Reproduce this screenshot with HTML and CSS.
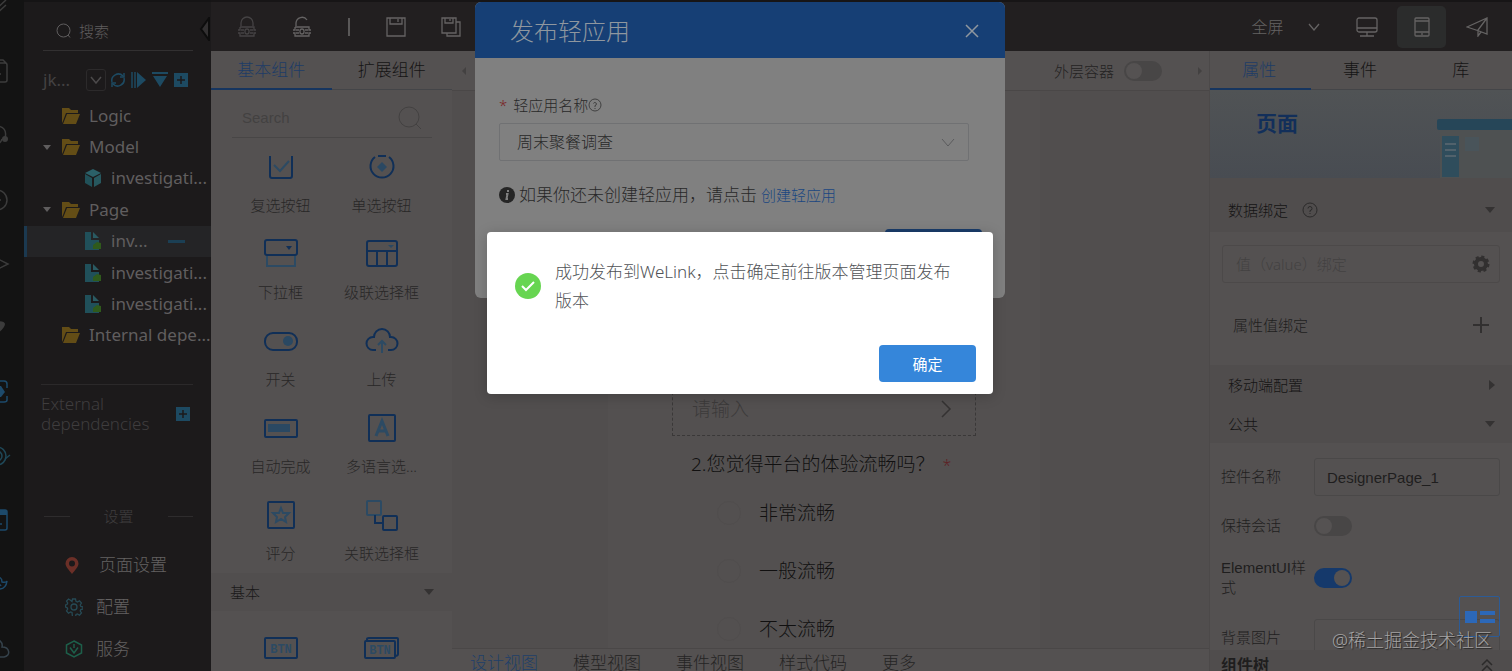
FILE: index.html
```
<!DOCTYPE html>
<html lang="zh-CN">
<head>
    <meta charset="UTF-8">
    <meta name="viewport" content="width=device-width, initial-scale=1.0">
    <title>发布轻应用</title>
    <link rel="stylesheet" href="styles.css">
</head>
<body>

    <!-- Icon rail -->
    <nav class="rail">
        <svg viewBox="0 0 24 24"><path d="M-4 13L6 4M-4 18L6 9"/></svg>
        <svg viewBox="0 0 24 24"><path d="M-4 3H5a2 2 0 0 1 2 2V20a2 2 0 0 1-2 2H-4M-4 0H3l4 4M0 14h1"/></svg>
        <svg viewBox="0 0 24 24"><path d="M-4 2C4 2 7 7 5 14M-4 20c3 0 5-2 6-5"/><circle class="fill" cx="5" cy="15" r="3"/></svg>
        <svg viewBox="0 0 24 24"><circle cx="-3" cy="12" r="10"/><circle class="fill" cx="0" cy="12" r="1"/></svg>
        <svg viewBox="0 0 24 24"><path d="M-2 7L8 12L-2 17"/></svg>
        <svg viewBox="0 0 24 24"><path class="fill" d="M-5 7c3-3 10-2 10 1s-4 7-7 9"/></svg>
        <svg class="blue" viewBox="0 0 24 24"><path d="M-2 1H4q3 0 3 3v4M7 16v4q0 2-3 2H-2"/><path class="fill" d="M-2 6h3l4 6-4 5h-3z"/></svg>
        <svg class="teal" viewBox="0 0 24 24"><circle cx="-3" cy="12" r="9"/><circle cx="-3" cy="12" r="5"/><path d="M5 15l5-4"/></svg>
        <svg class="blue" viewBox="0 0 24 24"><path d="M-4 2H5q2 0 2 2V20q0 2-2 2H-4M-3 16H2"/><path class="fill" d="M-4 2H7V7H-4z"/></svg>
        <svg class="blue" viewBox="0 0 24 24"><path d="M-4 6q6-2 6 4 4 1 5-1-1 8-8 8M-4 12q4 0 5 2"/></svg>
        <svg class="slate" viewBox="0 0 24 24"><path d="M-6 6c5-5 9 1 8 5 8 0 9 9 2 10H-6"/></svg>
    </nav>

    <!-- Project sidebar -->
    <aside class="sidebar">
        <button class="collapse" aria-label="收起"><svg viewBox="0 0 12 24" width="12" height="24"><path d="M10 1L2 12l8 11z"/></svg></button>
        <label class="side-search">
            <svg viewBox="0 0 16 16" width="16" height="16"><circle cx="7.500" cy="7.500" r="6.500"/><path d="M12 12l2 2.500"/></svg>
            <input type="text" placeholder="搜索">
        </label>
        <div class="project">
            <span class="project-name">jk...</span>
            <button class="project-drop" aria-label="切换项目"><svg viewBox="0 0 12 8" width="12" height="8"><path d="M1 1l5 6 5-6"/></svg></button>
            <button aria-label="刷新"><svg class="refresh" viewBox="0 0 16 16" width="16" height="16"><path d="M2 10A6.500 6.500 0 0 1 13 4M14 6A6.500 6.500 0 0 1 3 12"/><path d="M14 1v4h-4M2 15v-4h4"/></svg></button>
            <button aria-label="运行"><svg viewBox="0 0 16 16" width="16" height="16"><path d="M1 0v16M4 0v16"/><path class="solid" d="M6 0l9 8-9 8z"/></svg></button>
            <button aria-label="筛选"><svg viewBox="0 0 16 16" width="16" height="16"><path class="solid" d="M0 0h16v2H0zM1 4h14L8 15z"/></svg></button>
            <button aria-label="新增"><svg viewBox="0 0 16 16" width="16" height="16"><rect class="solid" x="1" y="1" width="14" height="14"/><path class="plus" d="M8 4v8M4 8h8"/></svg></button>
        </div>
        <ul class="tree">
            <li class="folder"><i></i><svg viewBox="0 0 18 16"><use href="#folder"/></svg>Logic</li>
            <li class="folder open"><i></i><svg viewBox="0 0 18 16"><use href="#folder"/></svg>Model</li>
            <li class="leaf"><svg viewBox="0 0 18 18"><use href="#cube"/></svg>investigati...</li>
            <li class="folder open"><i></i><svg viewBox="0 0 18 16"><use href="#folder"/></svg>Page</li>
            <li class="leaf active"><svg viewBox="0 0 18 18"><use href="#page"/></svg>inv...<b class="more"></b></li>
            <li class="leaf"><svg viewBox="0 0 18 18"><use href="#page"/></svg>investigati...</li>
            <li class="leaf"><svg viewBox="0 0 18 18"><use href="#page"/></svg>investigati...</li>
            <li class="folder"><i></i><svg viewBox="0 0 18 16"><use href="#folder"/></svg>Internal depe...</li>
        </ul>
        <div class="external">
            <span>External dependencies</span>
            <button aria-label="新增依赖"><svg viewBox="0 0 16 16" width="16" height="16"><rect class="solid" x="1" y="1" width="14" height="14"/><path class="plus" d="M8 4v8M4 8h8"/></svg></button>
        </div>
        <div class="settings-title">设置</div>
        <ul class="settings">
            <li class="first"><svg viewBox="0 0 18 18"><path fill="#6b2f27" fill-rule="evenodd" d="M9 1a6.500 6.500 0 0 1 6.500 6.500C15.500 11 12 14 9 18 6 14 2.500 11 2.500 7.500A6.500 6.500 0 0 1 9 1zm0 3.500a3 3 0 1 0 0 6 3 3 0 0 0 0-6z"/></svg>页面设置</li>
            <li><svg viewBox="0 0 18 18" fill="none" stroke="#264a55" stroke-width="1.300"><path d="M7.500 1h3l.5 2.300 1.500.7 2-1.200 2 2.200-1.300 2 .6 1.500 2.200.5v2l-2.200.6-.6 1.400 1.300 2-2 2.200-2-1.300-1.500.6-.5 2.500h-3L7 14.500 5.500 14l-2 1.200-2-2.200L2.700 11 2 9.600l-1.500-.6V7L2 6.500l.7-1.500-1.200-2 2-2 2 1.200L7 3.500z"/><circle cx="9" cy="9" r="3"/></svg>配置</li>
            <li><svg viewBox="0 0 18 18" fill="none" stroke="#1d5f4a" stroke-width="1.500"><path d="M9 1l7.500 4v8L9 17l-7.500-4V5z"/><path d="M5 7.500l4 5.500 4-5.500M9 4v4"/></svg>服务</li>
        </ul>
    </aside>

    <main class="main">
        <header class="topbar">
            <div class="tools">
                <button class="dim" aria-label="锁定"><svg viewBox="0 0 20 22"><use href="#lock-body"/><path d="M4 10V7a6 6 0 0 1 12 0v3"/></svg></button>
                <button aria-label="解锁"><svg viewBox="0 0 20 22"><use href="#lock-body"/><path d="M4 10V7a6 6 0 0 1 11-3"/></svg></button>
                <span class="split"></span>
                <button aria-label="保存"><svg viewBox="0 0 20 22"><path d="M1 2h18v18H1zM4 2v6h12V2M12 3v3"/></svg></button>
                <button aria-label="全部保存"><svg viewBox="0 0 20 22"><path d="M1 2h14v15H1zM4 2v5h8V2M9 3v2M15 6h4v14H6v-3"/></svg></button>
            </div>
            <div class="view-tools">
                <button class="screen">全屏<svg viewBox="0 0 12 8" width="12" height="8"><path d="M1 1l5 6 5-6"/></svg></button>
                <button aria-label="桌面"><svg viewBox="0 0 22 20"><rect x="1" y="1" width="20" height="14" rx="2"/><path d="M1 11h20M11 15v4M4 19h14"/></svg></button>
                <button class="on" aria-label="手机"><svg viewBox="0 0 22 20"><rect x="4" y="1" width="14" height="18" rx="1"/><path d="M4 4h14M4 15h14M11 16v2"/></svg></button>
                <button aria-label="发布"><svg viewBox="0 0 22 20"><path d="M1 10L21 1v16l-8-3zM21 1l-9 12v6l3-4"/></svg></button>
            </div>
        </header>

        <div class="workspace">
            <!-- Component palette -->
            <section class="palette">
                <div class="tabs palette-tabs">
                    <button class="active">基本组件</button>
                    <button>扩展组件</button>
                </div>
                <label class="palette-search">
                    <input type="text" placeholder="Search">
                    <svg viewBox="0 0 24 24" width="24" height="24"><circle cx="11" cy="11" r="10"/><path d="M18 18l5 5"/></svg>
                </label>
                <div class="grid">
                    <div class="item"><svg viewBox="0 0 36 32"><path d="M7 5v20q0 2 2 2h18q2 0 2-2V5"/><path class="light" d="M11 14l6 6 9-10"/></svg>复选按钮</div>
                    <div class="item"><svg viewBox="0 0 36 32"><path d="M11 6a11.500 11.500 0 1 0 14 0M14 5h8"/><path class="lightfill" d="M18 11l5 5-5 5-5-5z"/></svg>单选按钮</div>
                    <div class="item"><svg viewBox="0 0 36 32"><path class="light" d="M4 17v11h28V17"/><rect x="2" y="2" width="32" height="15" rx="2"/><path class="darkfill" d="M23 8h6l-3 4z"/></svg>下拉框</div>
                    <div class="item"><svg viewBox="0 0 36 32"><rect x="3" y="3" width="30" height="25" rx="2"/><path d="M3 13h30M13 13v15M23 13v15"/><path class="lightfill" d="M24 7h6l-3 3z"/></svg>级联选择框</div>
                    <div class="item"><svg viewBox="0 0 36 32"><rect x="2" y="8" width="32" height="17" rx="8"/><circle class="lightfill" cx="25" cy="16" r="5"/></svg>开关</div>
                    <div class="item"><svg viewBox="0 0 36 32"><path d="M12 25H9a6 6 0 0 1 0-13h1a8 8 0 0 1 16 0h1a6 6 0 0 1 0 13h-3"/><path class="light" d="M18 28V16M14 20l4-4 4 4"/></svg>上传</div>
                    <div class="item"><svg viewBox="0 0 36 32"><rect x="2" y="8" width="32" height="17" rx="1"/><path class="lightfill" d="M5 12h22v8H5z"/></svg>自动完成</div>
                    <div class="item"><svg viewBox="0 0 36 32"><rect x="5" y="3" width="26" height="26" rx="1"/><path class="light thick" d="M12 24l6-15 6 15M14 19h8"/></svg>多语言选...</div>
                    <div class="item"><svg viewBox="0 0 36 32"><rect x="5" y="3" width="26" height="26" rx="1"/><path class="light" d="M18 9l2 5h6l-4 4 1 5-5-3-5 3 1-5-4-4h6z"/></svg>评分</div>
                    <div class="item"><svg viewBox="0 0 36 32"><rect class="light" x="3" y="2" width="14" height="14" rx="1"/><rect x="19" y="17" width="14" height="14" rx="1"/><path d="M11 16v8h8"/></svg>关联选择框</div>
                </div>
                <button class="group">基本<i class="caret"></i></button>
                <div class="grid second">
                    <div class="item"><svg viewBox="0 0 36 32"><rect x="2" y="6" width="32" height="20" rx="1"/><text x="18" y="21">BTN</text></svg></div>
                    <div class="item"><svg viewBox="0 0 36 32"><path d="M3 9V7q0-1 2-1h28q1 0 1 1v15q0 2-3 2"/><rect x="1" y="9" width="30" height="17" rx="1"/><text x="16" y="22">BTN</text></svg></div>
                </div>
            </section>

            <!-- Design canvas -->
            <section class="canvas">
                <div class="canvas-bar">
                    <i class="arrow left"></i>
                    <label class="outer">外层容器<input type="checkbox" class="switch"></label>
                    <i class="arrow right"></i>
                </div>
                <div class="stage">
                    <form class="phone">
                        <div class="phone-field">
                            <input type="text" placeholder="请输入" aria-label="请输入">
                            <svg viewBox="0 0 12 20" width="12" height="20"><path d="M2 2l8 8-8 8"/></svg>
                        </div>
                        <p class="question">2.您觉得平台的体验流畅吗？<span class="required">*</span></p>
                        <label class="option"><input type="radio" name="smooth">非常流畅</label>
                        <label class="option"><input type="radio" name="smooth">一般流畅</label>
                        <label class="option"><input type="radio" name="smooth">不太流畅</label>
                    </form>
                </div>
                <div class="views">
                    <a href="#" class="active">设计视图</a>
                    <a href="#">模型视图</a>
                    <a href="#">事件视图</a>
                    <a href="#">样式代码</a>
                    <a href="#">更多</a>
                </div>
            </section>

            <!-- Properties -->
            <section class="props">
                <div class="tabs prop-tabs">
                    <button class="active">属性</button>
                    <button>事件</button>
                    <button>库</button>
                </div>
                <div class="banner">
                    <h2>页面</h2>
                    <svg viewBox="0 0 75 88" width="75" height="88">
                        <path fill="#4e5152" d="M3 40h72v48H3z"/>
                        <path fill="#264658" d="M2 29h73v11H2q-2 0-2-2v-7q0-2 2-2z"/>
                        <path fill="#2f4d5c" d="M5 46h17v41H5z"/>
                        <path stroke="#51626c" stroke-width="2" d="M8 54h11M8 60h11M8 66h11"/>
                        <path fill="#49545a" d="M28 47h14v14H28z"/>
                    </svg>
                </div>
                <button class="section-title first">数据绑定
                    <svg viewBox="0 0 16 16" width="16" height="16"><circle cx="8" cy="8" r="7"/><path d="M6 6.500a2 2 0 1 1 2 2V10M8 11v1"/></svg>
                    <i class="caret"></i>
                </button>
                <div class="binding">
                    <div class="bind-field">
                        <input type="text" placeholder="值（value）绑定" aria-label="值绑定">
                        <svg viewBox="0 0 18 18" width="18" height="18"><circle cx="9" cy="9" r="5" fill="none" stroke="#323030" stroke-width="4"/><circle cx="9" cy="9" r="7" fill="none" stroke="#323030" stroke-width="3" stroke-dasharray="3 2.500"/></svg>
                    </div>
                    <div class="bind-row">属性值绑定<svg viewBox="0 0 16 16" width="16" height="16"><path d="M8 0v16M0 8h16" stroke="#323030" stroke-width="2"/></svg></div>
                </div>
                <button class="section-title">移动端配置<i class="caret side"></i></button>
                <button class="section-title">公共<i class="caret"></i></button>
                <div class="common">
                    <label for="name">控件名称</label>
                    <input type="text" id="name" class="field" value="DesignerPage_1">
                    <label for="keep">保持会话</label>
                    <input type="checkbox" id="keep" class="switch">
                    <label for="element">ElementUI样式</label>
                    <input type="checkbox" id="element" class="switch" checked>
                    <label for="bg">背景图片</label>
                    <input type="text" id="bg" class="field">
                </div>
                <div class="tree-title">组件树<svg viewBox="0 0 12 14" width="12" height="14"><path d="M1 7l5-5 5 5M1 13l5-5 5 5"/></svg></div>
            </section>
        </div>
    </main>

    <button class="float-btn" aria-label="布局"><svg viewBox="0 0 30 14" width="30" height="14"><path d="M0 1h12v12H0zM15 1h15v4H15zM15 9h15v4H15z"/></svg></button>
    <div class="watermark">@稀土掘金技术社区</div>

    <!-- Publish dialog -->
    <div class="overlay">
        <div class="publish" role="dialog">
            <div class="publish-head">
                <h1>发布轻应用</h1>
                <button aria-label="关闭"><svg viewBox="0 0 14 14" width="14" height="14"><path d="M1 1l12 12M13 1L1 13"/></svg></button>
            </div>
            <div class="publish-body">
                <label for="app" class="app-label"><span class="required">*</span>轻应用名称<svg viewBox="0 0 14 14" width="14" height="14"><circle cx="7" cy="7" r="6"/><path d="M5.500 5.500a1.500 1.500 0 1 1 1.500 2V9M7 10v1"/></svg></label>
                <div class="select">
                    <select id="app"><option>周末聚餐调查</option></select>
                    <svg viewBox="0 0 14 9" width="14" height="9"><path d="M1 1l6 7 6-7"/></svg>
                </div>
                <p class="hint"><svg viewBox="0 0 16 16" width="16" height="16"><circle cx="8" cy="8" r="8" fill="#252525"/><path d="M9 3v2M7 7h1.500L7.500 12H9" stroke="#808080" stroke-width="2" fill="none"/></svg>如果你还未创建轻应用，请点击 <a href="#">创建轻应用</a></p>
                <button class="publish-btn" aria-label="发布"></button>
            </div>
        </div>
    </div>

    <!-- Confirm box -->
    <div class="overlay">
        <div class="confirm" role="alertdialog">
            <div class="confirm-body">
                <svg viewBox="0 0 26 26" width="26" height="26"><circle cx="13" cy="13" r="13" fill="#67d551"/><path d="M7 13l4 4 8-8" fill="none" stroke="#fff" stroke-width="2"/></svg>
                <p>成功发布到WeLink，点击确定前往版本管理页面发布版本</p>
            </div>
            <button class="ok">确定</button>
        </div>
    </div>

    <!-- Shared icons -->
    <svg class="defs" width="0" height="0">
        <symbol id="folder" viewBox="0 0 18 16"><path fill="#634d16" d="M0 0h7l2 2h7v3H4L1 13 0 15zM5 6h13l-4 10H1z"/></symbol>
        <symbol id="cube" viewBox="0 0 18 18"><path fill="#2b6068" d="M9 0l8 4-8 4-8-4z"/><path fill="#215159" d="M1 5l7 4v9l-7-4z"/><path fill="#27585f" d="M17 5l-7 4v9l7-4z"/></symbol>
        <symbol id="page" viewBox="0 0 18 18"><path fill="#20505a" d="M1 0h6v8h8v10H1z"/><path fill="#2a5a62" d="M9 0l6 6H9z"/><path fill="#2f5a1c" d="M9 13l4-3 4 1v6H9z"/></symbol>
        <symbol id="lock-body" viewBox="0 0 20 22"><path d="M3 11h14v3h2M3 11v3H1M1 17h2v3h14v-3h2M4 14h3M4 17h3M13 14h3M13 17h3"/><rect x="8" y="13" width="4" height="5" rx="2"/></symbol>
    </svg>

</body>
</html>
```
FILE: styles.css
```
* {
    box-sizing: border-box;
}
body {
    margin: 0;
    display: flex;
    height: 100vh;
    overflow: hidden;
    background-color: #4f4c4c;
    color: #242323;
    font-family: "Noto Sans", "Noto Sans CJK SC", sans-serif;
    font-size: 15px;
    font-weight: 300;
    line-height: 20px;
}
button, input, select {
    font: inherit;
    color: inherit;
    background: none;
    border: none;
    padding: 0;
    margin: 0;
    outline: none;
}
button {
    cursor: pointer;
}
ul {
    list-style: none;
    margin: 0;
    padding: 0;
}
svg {
    display: block;
    flex: none;
}
.defs {
    position: absolute;
}

/* Rail */
.rail {
    width: 24px;
    flex: none;
    background-color: #131313;
    overflow: hidden;
}
.rail svg {
    width: 24px;
    height: 24px;
    margin-bottom: 40px;
    overflow: visible;
    fill: none;
    stroke: #3c3c3c;
    stroke-width: 1.5;
}
.rail svg:first-child {
    margin-top: -4px;
}
.rail .fill {
    fill: #3c3c3c;
    stroke: none;
}
.rail .blue {
    stroke: #1d4a6b;
}
.rail .blue .fill {
    fill: #1d4a6b;
}
.rail .teal {
    stroke: #1f4858;
}
.rail .slate {
    stroke: #35424b;
}

/* Sidebar */
.sidebar {
    position: relative;
    width: 187px;
    flex: none;
    background-color: #1c1a1b;
    color: #605e5f;
    border-top: 2px solid #151415;
}
.sidebar button svg {
    fill: none;
    stroke: #1d4a62;
    stroke-width: 1.5;
}
.sidebar .solid {
    fill: #1d4a62;
    stroke: none;
}
.sidebar .plus {
    stroke: #1c1a1b;
}
.collapse {
    position: absolute;
    right: 0;
    top: 15px;
}
.sidebar .collapse svg {
    fill: #323031;
    stroke: #0d0d0d;
    stroke-width: 2;
}
.side-search {
    display: flex;
    align-items: center;
    gap: 7px;
    height: 49px;
    margin: 0 18px 0 19px;
    padding: 9px 0 0 13px;
    border-bottom: 1px solid #323031;
}
.side-search svg {
    fill: none;
    stroke: #5f5d5e;
}
.side-search input {
    width: 80px;
}
input::placeholder {
    color: inherit;
    opacity: 1;
}
.project {
    display: flex;
    align-items: center;
    gap: 5px;
    height: 50px;
    margin-top: 4px;
    padding-left: 19px;
}
.project-name {
    width: 38px;
    font-size: 17px;
    font-weight: 400;
    color: #434142;
}
.project .project-drop {
    display: flex;
    align-items: center;
    justify-content: center;
    width: 20px;
    height: 22px;
    margin-right: -1px;
    border: 1px solid #2c2a2b;
    border-radius: 3px;
}
.sidebar .project-drop svg {
    stroke: #4c4a4b;
}
.tree {
    display: grid;
    grid-template-rows: repeat(8, 1fr);
    height: 251px;
    margin-top: -5px;
    font-size: 17px;
    font-weight: 400;
}
.tree li {
    display: flex;
    align-items: center;
    white-space: nowrap;
}
.tree svg {
    width: 18px;
    height: 16px;
    margin-right: 9px;
}
.folder {
    padding-left: 19px;
}
.folder i {
    width: 8px;
    margin-right: 11px;
}
.folder.open i {
    border: 4px solid transparent;
    border-top: 5px solid #5f5d5e;
    border-bottom: none;
}
.tree .leaf {
    padding-left: 60px;
}
.tree .leaf svg {
    height: 18px;
}
.tree .active {
    padding-left: 57px;
    background-color: #242426;
    border-left: 3px solid #1b3950;
}
.more {
    width: 17px;
    height: 3px;
    margin-left: 20px;
    background-color: #1b3f54;
}
.external {
    display: flex;
    align-items: center;
    justify-content: space-between;
    margin: 33px 18px 0 17px;
    padding: 9px 2px 0 0;
    border-top: 1px solid #2b292a;
    font-size: 17px;
    color: #3f3d3e;
}
.external span {
    width: 110px;
}
.settings-title {
    display: flex;
    align-items: center;
    gap: 34px;
    margin: 72px 18px 0 20px;
    color: #3f3d3e;
}
.settings-title::before, .settings-title::after {
    content: "";
    flex: 1;
    height: 1px;
    background-color: #2e2c2d;
}
.settings {
    margin-top: 18px;
    font-size: 17px;
    color: #646262;
}
.settings li {
    display: flex;
    align-items: center;
    gap: 13px;
    height: 42px;
    padding-left: 41px;
}
.settings .first {
    gap: 18px;
    padding-left: 39px;
}
.settings svg {
    width: 18px;
    height: 18px;
}

/* Top bar */
.main {
    flex: 1;
    min-width: 0;
    display: flex;
    flex-direction: column;
}
.topbar {
    display: flex;
    justify-content: space-between;
    height: 51px;
    flex: none;
    background-color: #221f20;
    border-top: 2px solid #171516;
    color: #656363;
    font-size: 16px;
}
.topbar svg {
    fill: none;
    stroke: currentColor;
    stroke-width: 1.3;
}
.tools, .view-tools {
    display: flex;
    align-items: center;
}
.tools {
    gap: 35px;
    padding-left: 26px;
}
.tools svg {
    width: 20px;
    height: 22px;
}
.tools .dim {
    color: #454344;
}
.split {
    width: 2px;
    height: 18px;
    margin: 0 1px;
    background-color: #5a5858;
}
.view-tools {
    padding-right: 11px;
    gap: 6px;
}
.view-tools button {
    display: flex;
    align-items: center;
    justify-content: center;
    width: 49px;
    height: 42px;
    border-radius: 5px;
}
.view-tools svg {
    width: 22px;
    height: 20px;
}
.view-tools .screen {
    width: 69px;
    gap: 24px;
    margin-right: 16px;
}
.view-tools .screen svg {
    width: 12px;
    height: 8px;
}
.view-tools .on {
    background-color: #2b2c2c;
}
.workspace {
    flex: 1;
    min-height: 0;
    display: flex;
}

/* Tabs */
.tabs {
    display: flex;
    height: 39px;
    flex: none;
    border-bottom: 1px solid #444548;
    font-size: 17px;
    color: #151414;
}
.tabs button {
    flex: 1;
}
.tabs .active {
    margin-bottom: -1px;
    color: #1d3c66;
    border-bottom: 2px solid #16355f;
}

/* Palette */
.palette {
    width: 241px;
    flex: none;
    overflow: hidden;
    background-color: #545151;
    color: #282727;
}
.palette-search {
    display: flex;
    align-items: center;
    justify-content: space-between;
    height: 48px;
    margin: 0 20px 5px 21px;
    padding: 8px 10px 0;
    border-bottom: 1px solid #484646;
    color: #434141;
}
.palette-search input {
    width: 120px;
    font-family: "Liberation Sans", sans-serif;
}
.palette-search svg {
    fill: none;
    stroke: #434141;
}
.grid {
    display: grid;
    grid-template-columns: 101px 101px;
    row-gap: 15px;
    padding: 0 19px 10px;
}
.grid.second {
    padding-top: 13px;
}
.item {
    display: flex;
    flex-direction: column;
    align-items: center;
    gap: 12px;
    height: 72px;
    padding-top: 8px;
}
.item svg {
    width: 36px;
    height: 32px;
    fill: none;
    stroke: #102f57;
    stroke-width: 2;
}
.item .light {
    stroke: #2c4a63;
}
.item .thick {
    stroke-width: 3;
}
.item .lightfill {
    fill: #2a4862;
    stroke: none;
}
.item .darkfill {
    fill: #102f57;
    stroke: none;
}
.item text {
    fill: #2c4a63;
    stroke: none;
    font: bold 12px "Liberation Mono", monospace;
    text-anchor: middle;
}
.group {
    display: flex;
    align-items: center;
    justify-content: space-between;
    width: 100%;
    height: 38px;
    padding: 0 18px 0 19px;
    background-color: #514e4e;
    color: #1a1919;
}
.caret {
    border: 5px solid transparent;
    border-top: 6px solid #343232;
    border-bottom: none;
}
.caret.side {
    border: 5px solid transparent;
    border-left: 6px solid #343232;
    border-right: none;
}

/* Canvas */
.canvas {
    flex: 1;
    min-width: 0;
    display: flex;
    flex-direction: column;
    background-color: #514e4e;
}
.canvas-bar {
    display: flex;
    align-items: center;
    height: 40px;
    flex: none;
    padding: 0 3px 0 6px;
    background-color: #545151;
    border-bottom: 1px solid #4a4747;
}
.arrow {
    border: 4px solid transparent;
}
.arrow.left {
    border-right-color: #434141;
}
.arrow.right {
    border-left-color: #434141;
}
.outer {
    display: flex;
    align-items: center;
    gap: 10px;
    margin: 0 36px 0 auto;
}
.switch {
    appearance: none;
    width: 38px;
    height: 20px;
    padding: 2px;
    border-radius: 10px;
    background-color: #484646;
}
.switch::before {
    content: "";
    display: block;
    width: 16px;
    height: 16px;
    border-radius: 50%;
    background-color: #555252;
}
.switch:checked {
    background-color: #15396b;
}
.switch:checked::before {
    margin-left: auto;
}
.stage {
    flex: 1;
    min-height: 0;
    overflow: hidden;
    padding-left: 156px;
}
.phone {
    width: 432px;
    min-height: 100%;
    padding: 291px 64px 0;
    background-color: #535050;
    color: #111010;
    font-size: 19px;
}
.phone-field {
    display: flex;
    align-items: center;
    justify-content: space-between;
    height: 54px;
    padding: 0 23px 0 19px;
    border: 1px dashed #3a3838;
    color: #3c3a3a;
}
.phone-field input {
    width: 200px;
}
.phone-field svg {
    fill: none;
    stroke: #343232;
    stroke-width: 1.5;
}
.question {
    margin: 14px 0 4px 19px;
    line-height: 29px;
    white-space: nowrap;
}
.question .required {
    margin-left: 8px;
    font-size: 16px;
}
.required {
    color: #5e1f24;
}
.option {
    display: flex;
    align-items: center;
    gap: 18px;
    height: 58px;
    padding-left: 45px;
}
.option input {
    appearance: none;
    width: 24px;
    height: 24px;
    border: 1px solid #504d4d;
    border-radius: 50%;
}
.views {
    display: flex;
    gap: 35px;
    height: 23px;
    flex: none;
    padding: 4px 18px 0;
    border-top: 1px solid #4a4747;
    background-color: #545151;
    font-size: 17px;
}
.views a {
    color: #252424;
    text-decoration: none;
    white-space: nowrap;
}
.views .active {
    color: #1e3f69;
}

/* Properties */
.props {
    width: 303px;
    flex: none;
    display: flex;
    flex-direction: column;
    overflow: hidden;
    background-color: #504d4d;
    border-left: 1px solid #4c4949;
    color: #1f1e1e;
}
.prop-tabs {
    background-color: #545151;
}
.prop-tabs button {
    padding-right: 2px;
}
.banner {
    display: flex;
    justify-content: space-between;
    height: 88px;
    flex: none;
    padding-left: 46px;
    background: linear-gradient(#505355, #484c52);
}
.banner h2 {
    margin: 19px 0;
    font-size: 21px;
    line-height: 28px;
    color: #122f5a;
}
.section-title {
    display: flex;
    align-items: center;
    height: 39px;
    flex: none;
    padding: 0 17px 0 18px;
    color: #151414;
}
.section-title.first {
    height: 42px;
    margin-top: 12px;
    padding-bottom: 3px;
}
.section-title svg {
    margin-left: 14px;
    fill: none;
    stroke: #2b2a2a;
}
.section-title .caret {
    margin-left: auto;
}
.binding {
    flex: none;
    height: 133px;
    padding: 13px 12px 0;
    background-color: #545151;
}
.bind-field {
    display: flex;
    align-items: center;
    justify-content: space-between;
    height: 38px;
    padding: 0 9px 0 13px;
    border: 1px solid #4c4949;
    border-radius: 3px;
    color: #434141;
}
.bind-field input {
    width: 180px;
}
.bind-row {
    display: flex;
    align-items: center;
    justify-content: space-between;
    margin-top: 32px;
    padding: 0 11px;
}
.common {
    flex: 1;
    min-height: 0;
    overflow: hidden;
    display: grid;
    grid-template-columns: 88px 1fr;
    grid-template-rows: 38px 22px 44px 38px;
    column-gap: 5px;
    row-gap: 19px;
    align-items: center;
    padding: 15px 12px 0 11px;
    background-color: #545151;
    font-family: "Liberation Sans", "Noto Sans CJK SC", sans-serif;
    word-break: break-all;
}
.field {
    width: 100%;
    height: 38px;
    padding: 0 12px;
    border: 1px solid #4a4848;
    border-radius: 3px;
}
.tree-title {
    display: flex;
    align-items: center;
    justify-content: space-between;
    height: 21px;
    flex: none;
    padding: 9px 19px 0 11px;
    background-color: #504d4d;
    font-size: 16px;
    font-weight: bold;
    line-height: 12px;
}
.tree-title svg {
    fill: none;
    stroke: #2b2a2a;
    stroke-width: 1.5;
}

/* Floating bits */
.float-btn {
    position: absolute;
    right: 12px;
    bottom: 34px;
    z-index: 1;
    width: 41px;
    height: 41px;
    padding-left: 5px;
    border: 1px solid #2c5b96;
    border-radius: 2px;
}
.float-btn svg {
    fill: #2c68b8;
}
.watermark {
    position: absolute;
    right: 20px;
    bottom: 20px;
    z-index: 1;
    font-size: 18px;
    line-height: 22px;
    color: #a5a3a3;
    text-shadow: 1px 1px 1px #222;
}

/* Dialogs */
.overlay {
    position: absolute;
    inset: 0 32px auto 0;
    display: flex;
    justify-content: center;
}
.publish {
    width: 530px;
    height: 296px;
    margin-top: 2px;
    overflow: hidden;
    border-radius: 6px;
    background-color: #808080;
    color: #282828;
}
.publish-head {
    display: flex;
    align-items: center;
    justify-content: space-between;
    height: 56px;
    padding: 2px 26px 0 35px;
    background-color: #163f75;
    color: #8f979f;
}
.publish-head h1 {
    margin: 0;
    font-size: 24px;
    font-weight: 300;
    line-height: 32px;
}
.publish-head svg, .app-label svg, .select svg {
    fill: none;
    stroke: currentColor;
}
.publish-head svg {
    stroke-width: 1.5;
}
.publish-body {
    padding: 37px 36px 0 24px;
}
.app-label {
    display: flex;
    align-items: center;
}
.app-label .required {
    margin-right: 6px;
    color: #7a1f24;
}
.app-label svg {
    color: #404040;
}
.select {
    position: relative;
    margin-top: 8px;
}
.select select {
    appearance: none;
    display: block;
    width: 100%;
    height: 38px;
    padding-left: 17px;
    border: 1px solid #707173;
    border-radius: 2px;
    font-size: 16px;
}
.select svg {
    position: absolute;
    right: 14px;
    top: 15px;
    color: #5a5b5d;
}
.hint {
    display: flex;
    align-items: center;
    gap: 4px;
    margin: 22px 0;
    line-height: 24px;
    font-size: 17px;
}
.hint a {
    font-size: 15px;
    color: #194680;
    text-decoration: none;
}
.publish-btn {
    display: block;
    width: 97px;
    height: 36px;
    margin: 0 -13px 0 auto;
    border-radius: 4px;
    background-color: #1a3d6b;
}
.confirm {
    width: 506px;
    height: 162px;
    margin-top: 232px;
    padding: 25px 17px 12px 28px;
    display: flex;
    flex-direction: column;
    justify-content: space-between;
    border-radius: 4px;
    background-color: #fff;
    box-shadow: 0 2px 14px rgba(0, 0, 0, 0.2);
}
.confirm-body {
    display: flex;
    align-items: center;
    gap: 14px;
    padding-right: 20px;
    color: #505256;
    font-size: 17px;
    line-height: 29px;
}
.confirm-body p {
    margin: 0;
}
.ok {
    align-self: flex-end;
    width: 97px;
    height: 37px;
    border-radius: 4px;
    background-color: #3586da;
    color: #fff;
    font-weight: 400;
}
```
